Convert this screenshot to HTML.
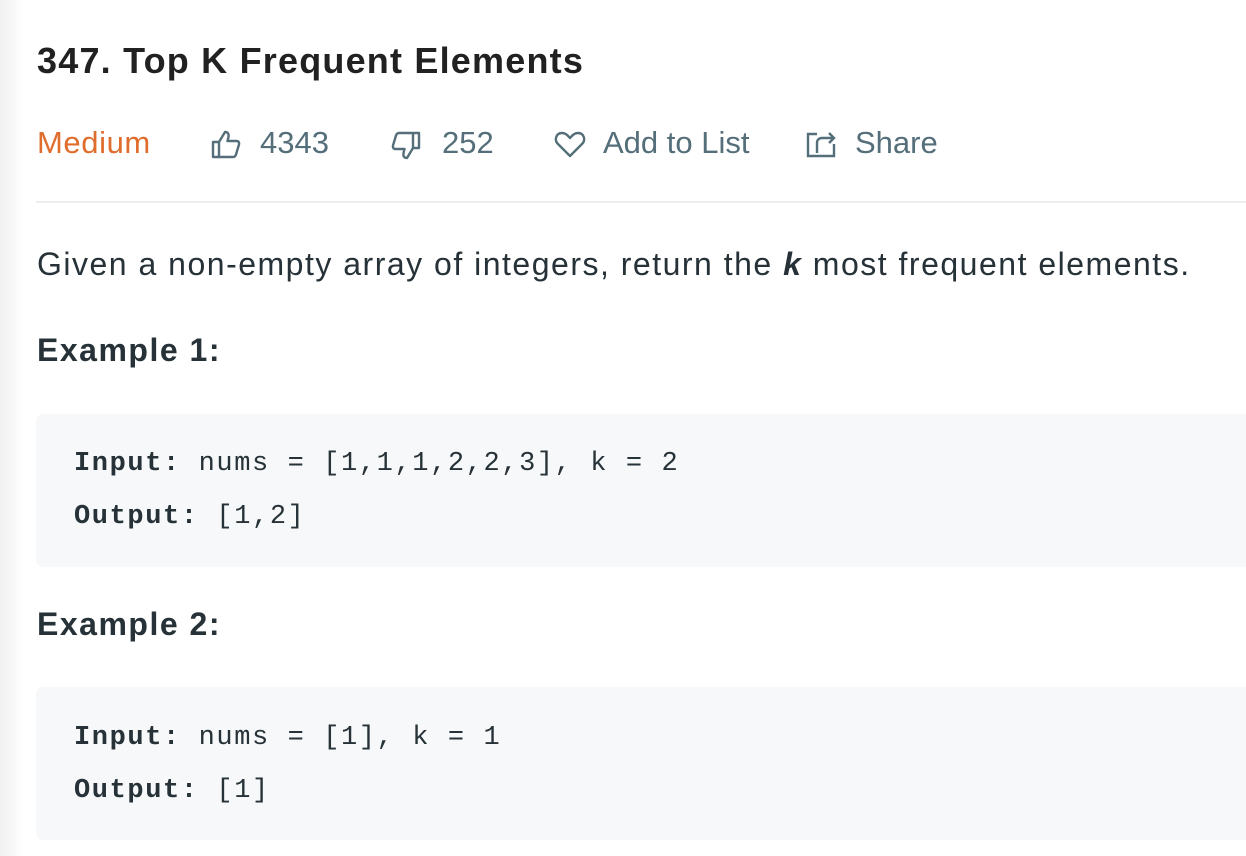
<!DOCTYPE html>
<html><head><style>
body{margin:0;width:1246px;height:856px;overflow:hidden;background:#fff;font-family:"Liberation Sans",sans-serif;color:#263238;position:relative}
.lg{position:absolute;left:0;top:0;width:24px;height:856px;background:linear-gradient(to right,#f0f0f0,#fff)}
.a{position:absolute;white-space:nowrap}
h1{position:absolute;left:37px;top:40px;margin:0;font-size:36px;letter-spacing:1.2px;font-weight:bold;color:#212121}
.meta{position:absolute;top:125px;font-size:31px;letter-spacing:0px;color:#546e7a}
.hr{position:absolute;left:36px;right:0;top:201px;height:2px;background:#eeeeee}
.p{left:37px;top:246px;font-size:32px;letter-spacing:1.5px}
.ex{left:37px;font-size:32px;letter-spacing:1.5px;font-weight:bold}
.code{position:absolute;left:36px;right:-10px;background:#f7f8fa;border-radius:7px}
.code div{position:absolute;left:38px;font-family:"Liberation Mono",monospace;font-size:27px;letter-spacing:1.6px;white-space:nowrap;color:#263238}
b{font-weight:bold}
svg{position:absolute}
</style></head><body>
<div class="lg"></div>
<h1>347. Top K Frequent Elements</h1>
<div class="a meta" style="left:37px;color:#e06c2d;letter-spacing:0.6px">Medium</div>
<svg style="left:211px;top:129px" width="32" height="30" viewBox="0 0 32 30" fill="none" stroke="#546e7a" stroke-width="2.4" stroke-linejoin="round"><path d="M2 13h6v15H2zM8 13l6-10c3 0 4 2 3.5 5l-1 4h9c2 0 3 1.5 2.5 3.5l-3 10c-.5 1.5-1.5 2.5-3 2.5H8"/></svg>
<div class="a meta" style="left:260px">4343</div>
<svg style="left:389px;top:131px" width="32" height="30" viewBox="0 0 32 30" fill="none" stroke="#546e7a" stroke-width="2.4" stroke-linejoin="round"><path d="M24 2h6v15h-6zM24 17l-6 10c-3 0-4-2-3.5-5l1-4h-9c-2 0-3-1.5-2.5-3.5l3-10C7.5 3 8.5 2 10 2h14"/></svg>
<div class="a meta" style="left:442px">252</div>
<svg style="left:554px;top:131px" width="32" height="28" viewBox="0 0 32 28" fill="none" stroke="#546e7a" stroke-width="2.4" stroke-linejoin="round"><path d="M16 25L4 13C0 9 2 2 8 2c4 0 6 3 8 5 2-2 4-5 8-5 6 0 8 7 4 11z"/></svg>
<div class="a meta" style="left:603px">Add to List</div>
<svg style="left:805px;top:129px" width="34" height="30" viewBox="0 0 34 30" fill="none" stroke="#546e7a" stroke-width="2.4"><path d="M12 5H3v22h26v-12M12 24v-10c0-3 2-5 5-5h12M24 4l5 5-5 5"/></svg>
<div class="a meta" style="left:855px">Share</div>
<div class="hr"></div>
<div class="a p">Given a non-empty array of integers, return the <b><i>k</i></b> most frequent elements.</div>
<div class="a ex" style="top:332px">Example 1:</div>
<div class="code" style="top:414px;height:153px">
<div style="top:35px"><b>Input:</b> nums = [1,1,1,2,2,3], k = 2</div>
<div style="top:88px"><b>Output:</b> [1,2]</div>
</div>
<div class="a ex" style="top:606px">Example 2:</div>
<div class="code" style="top:687px;height:153px">
<div style="top:36px"><b>Input:</b> nums = [1], k = 1</div>
<div style="top:89px"><b>Output:</b> [1]</div>
</div>
</body></html>
